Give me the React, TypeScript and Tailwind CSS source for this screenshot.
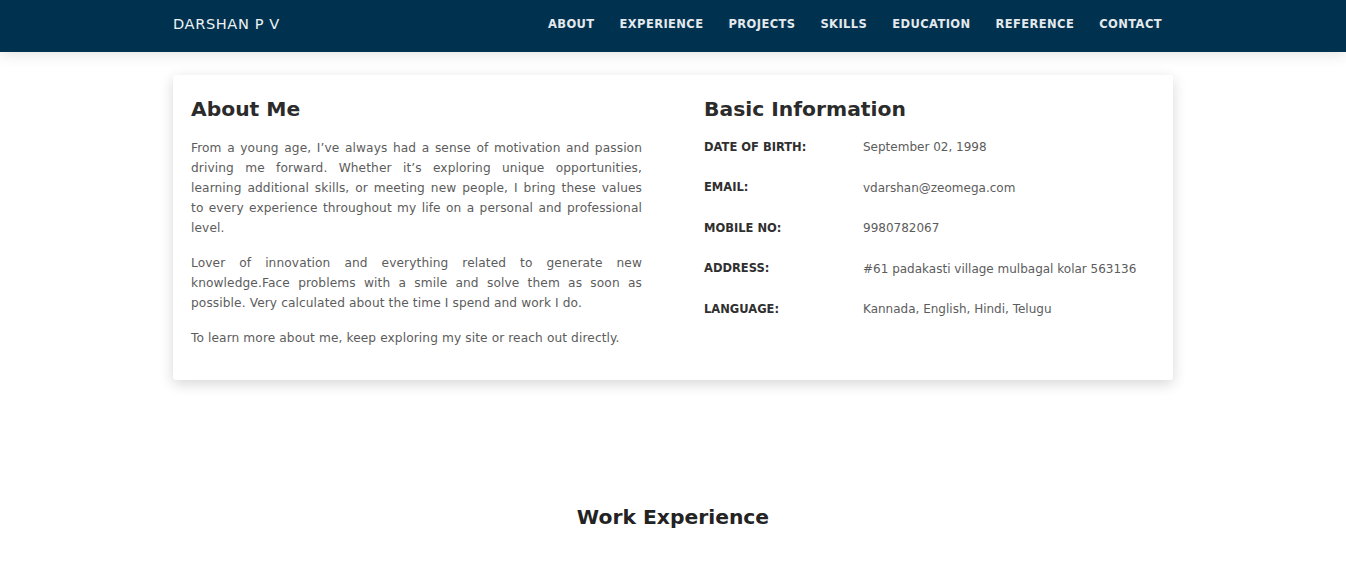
const navLinks = ['About', 'Experience', 'Projects', 'Skills', 'Education', 'Reference', 'Contact'];

const info = [
  { label: 'Date of birth:', value: 'September 02, 1998' },
  { label: 'Email:', value: 'vdarshan@zeomega.com' },
  { label: 'Mobile no:', value: '9980782067' },
  { label: 'Address:', value: '#61 padakasti village mulbagal kolar 563136' },
  { label: 'Language:', value: 'Kannada, English, Hindi, Telugu' },
];

export default function App() {
  return (
    <div className="min-h-screen bg-white font-['DejaVu_Sans',sans-serif]">
      {/* Navbar */}
      <header className="relative z-10 h-[52px] bg-[#00324f] shadow-[0_2px_14px_rgba(0,0,0,0.12)]">
        <div className="mx-auto flex h-full w-[1000px] items-center justify-between pb-[4px]">
          <a className="text-[14.6px] font-medium tracking-[0.6px] text-[#eef2f5]">DARSHAN P V</a>
          <nav className="flex items-center gap-[25px] pr-[11px] pt-[2px]">
            {navLinks.map((link) => (
              <a key={link} className="text-[11.5px] font-semibold uppercase tracking-[0.4px] text-[#e4e9ee]">
                {link}
              </a>
            ))}
          </nav>
        </div>
      </header>

      {/* About */}
      <section className="pt-[23px]">
        <div className="mx-auto grid w-[1000px] grid-cols-2 gap-[62px] rounded-[3px] bg-white px-[18px] pb-[32px] pt-[19px] shadow-[0_4px_14px_rgba(0,0,0,0.16)]">
          <div>
            <h2 className="mb-[14px] text-[20.3px] font-bold leading-[30px] text-[#2b2b2b]">About Me</h2>
            <div className="space-y-[15px] text-justify text-[12.2px] leading-[20px] tracking-[0.1px] text-[#5c5c5c]">
              <p>
                From a young age, I’ve always had a sense of motivation and passion driving me forward. Whether it’s
                exploring unique opportunities, learning&nbsp;additional skills, or meeting new people, I bring these
                values to&nbsp;every experience throughout my life on a personal and professional level.
              </p>
              <p>
                Lover of innovation and everything related to generate new knowledge.Face problems with a smile and solve
                them as soon as possible. Very calculated about the time I spend and work I do.
              </p>
              <p>To learn more about me, keep exploring my site or reach out directly.</p>
            </div>
          </div>
          <div>
            <h2 className="mb-[3px] text-[20.3px] font-bold leading-[30px] text-[#2b2b2b]">Basic Information</h2>
            <div className="flex flex-col">
              {info.map((row) => (
                <div key={row.label} className="flex h-[40.5px] items-center">
                  <span className="w-[159px] shrink-0 text-[11.5px] font-bold uppercase text-[#2f2f2f]">{row.label}</span>
                  <span className="text-[12px] text-[#5c5c5c]">{row.value}</span>
                </div>
              ))}
            </div>
          </div>
        </div>
      </section>

      {/* Work Experience */}
      <section className="pt-[122px]">
        <h2 className="text-center text-[20.3px] font-bold leading-[30px] text-[#232323]">Work Experience</h2>
      </section>
    </div>
  );
}
